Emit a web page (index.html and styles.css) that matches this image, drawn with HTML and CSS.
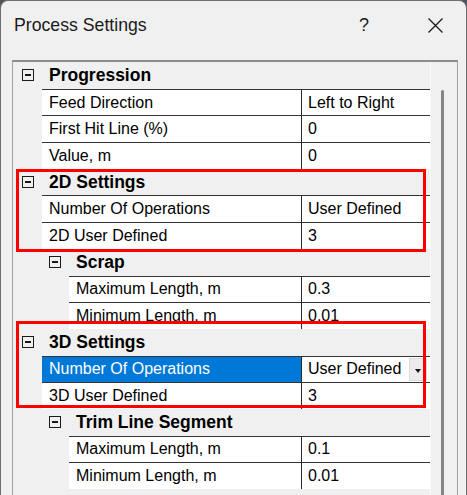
FILE: index.html
```html
<!DOCTYPE html>
<html lang="en">
<head>
    <meta charset="UTF-8">
    <title>Process Settings</title>
    <link rel="stylesheet" href="styles.css">
</head>
<body>
    <div class="window">
        <div class="titlebar">
            <span class="title">Process Settings</span>
            <span class="help">?</span>
            <span class="close">
                <svg width="15" height="15" viewBox="0 0 15 15">
                    <path d="M0.5 0.5 L14.5 14.5 M14.5 0.5 L0.5 14.5" stroke="#1b1b1b" stroke-width="1.3" fill="none"/>
                </svg>
            </span>
        </div>

        <div class="grid">
            <div class="rows">
                <div class="cat"><span class="toggle"></span>Progression</div>
                <div class="prop"><div class="gutter"></div><div class="label">Feed Direction</div><div class="value">Left to Right</div></div>
                <div class="prop"><div class="gutter"></div><div class="label">First Hit Line (%)</div><div class="value">0</div></div>
                <div class="prop"><div class="gutter"></div><div class="label">Value, m</div><div class="value">0</div></div>

                <div class="cat"><span class="toggle"></span>2D Settings</div>
                <div class="prop"><div class="gutter"></div><div class="label">Number Of Operations</div><div class="value">User Defined</div></div>
                <div class="prop"><div class="gutter"></div><div class="label">2D User Defined</div><div class="value">3</div></div>
                <div class="cat sub"><span class="toggle"></span>Scrap</div>
                <div class="prop sub"><div class="gutter"></div><div class="label">Maximum Length, m</div><div class="value">0.3</div></div>
                <div class="prop sub"><div class="gutter"></div><div class="label">Minimum Length, m</div><div class="value">0.01</div></div>

                <div class="cat"><span class="toggle"></span>3D Settings</div>
                <div class="prop selected"><div class="gutter"></div><div class="label">Number Of Operations</div><div class="value"><span class="text">User Defined</span><span class="drop"></span></div></div>
                <div class="prop"><div class="gutter"></div><div class="label">3D User Defined</div><div class="value">3</div></div>
                <div class="cat sub"><span class="toggle"></span>Trim Line Segment</div>
                <div class="prop sub"><div class="gutter"></div><div class="label">Maximum Length, m</div><div class="value">0.1</div></div>
                <div class="prop sub"><div class="gutter"></div><div class="label">Minimum Length, m</div><div class="value">0.01</div></div>
                <div class="cat sub"><span class="toggle"></span>Scrap</div>
            </div>
            <div class="scrollbar"><div class="thumb"></div></div>
        </div>

        <div class="mark mark-2d"></div>
        <div class="mark mark-3d"></div>
    </div>
</body>
</html>
```

FILE: styles.css
```css
body {
    margin: 0;
    background-color: #4b5561;
    font-family: 'Liberation Sans', Arial, sans-serif;
    color: #000;
}
.window {
    position: relative;
    height: 495px;
    overflow: hidden;
    background-color: #f0f0f0;
    border: 1px solid #6f6f6f;
    border-bottom: none;
    border-radius: 8px 8px 0 0;
    box-sizing: border-box;
}
.titlebar {
    display: flex;
    align-items: center;
    height: 49px;
    padding-left: 13px;
    color: #1b1b1b;
}
.title {
    font-size: 17.7px;
}
.help {
    margin-left: auto;
    width: 46px;
    text-align: center;
    font-size: 18px;
}
.close {
    display: flex;
    justify-content: center;
    width: 46px;
    margin-left: 25px;
    margin-right: 8px;
}
.grid {
    display: flex;
    margin: 10px 8px 0 11px;
    height: 460px;
    border: 1px solid #a0a0a0;
    border-top: 2px solid #8c8c8c;
    border-bottom: none;
}
.rows {
    width: 417px;
    overflow: hidden;
}
.cat {
    display: flex;
    align-items: center;
    height: 26.7px;
    padding-left: 9px;
    font-size: 17.5px;
    font-weight: bold;
}
.cat.sub {
    padding-left: 36px;
}
.toggle {
    position: relative;
    width: 10px;
    height: 10px;
    margin-right: 15px;
    border: 1.5px solid #1a1a1a;
    flex-shrink: 0;
}
.toggle::after {
    content: '';
    position: absolute;
    left: 2px;
    top: 4px;
    width: 6px;
    height: 1.5px;
    background-color: #1a1a1a;
}
.prop {
    display: flex;
    height: 26.7px;
    font-size: 16px;
}
.gutter {
    width: 29px;
    flex-shrink: 0;
}
.prop.sub .gutter {
    width: 56px;
}
.label, .value {
    display: flex;
    align-items: center;
    background-color: #fff;
    border-top: 1.5px solid #333;
    box-sizing: border-box;
    white-space: nowrap;
    overflow: hidden;
}
.label {
    width: 260px;
    padding-left: 7px;
    border-right: 1.5px solid #2a2a2a;
}
.prop.sub .label {
    width: 233px;
}
.value {
    flex: 1;
    padding-left: 6px;
}
.selected .label {
    background-color: #0078d7;
    color: #fff;
}
.value .text {
    flex: 1;
}
.drop {
    position: relative;
    width: 18px;
    height: 23px;
    margin-right: 3px;
    background-color: #ececec;
    border: 1px solid #dadada;
    box-sizing: border-box;
}
.drop::after {
    content: '';
    position: absolute;
    left: 5px;
    top: 10px;
    border-left: 3.5px solid transparent;
    border-right: 3.5px solid transparent;
    border-top: 4px solid #111;
}
.scrollbar {
    position: relative;
    flex: 1;
    border-left: 1px solid #fafafa;
}
.thumb {
    position: absolute;
    left: 10px;
    top: 28px;
    width: 3px;
    height: 460px;
    border-radius: 2px;
    background-color: #858585;
}
.mark {
    position: absolute;
    left: 15px;
    width: 410px;
    border: 3px solid #ff0000;
    box-sizing: border-box;
}
.mark-2d {
    top: 168px;
    height: 83px;
}
.mark-3d {
    top: 320px;
    height: 87px;
}
```
